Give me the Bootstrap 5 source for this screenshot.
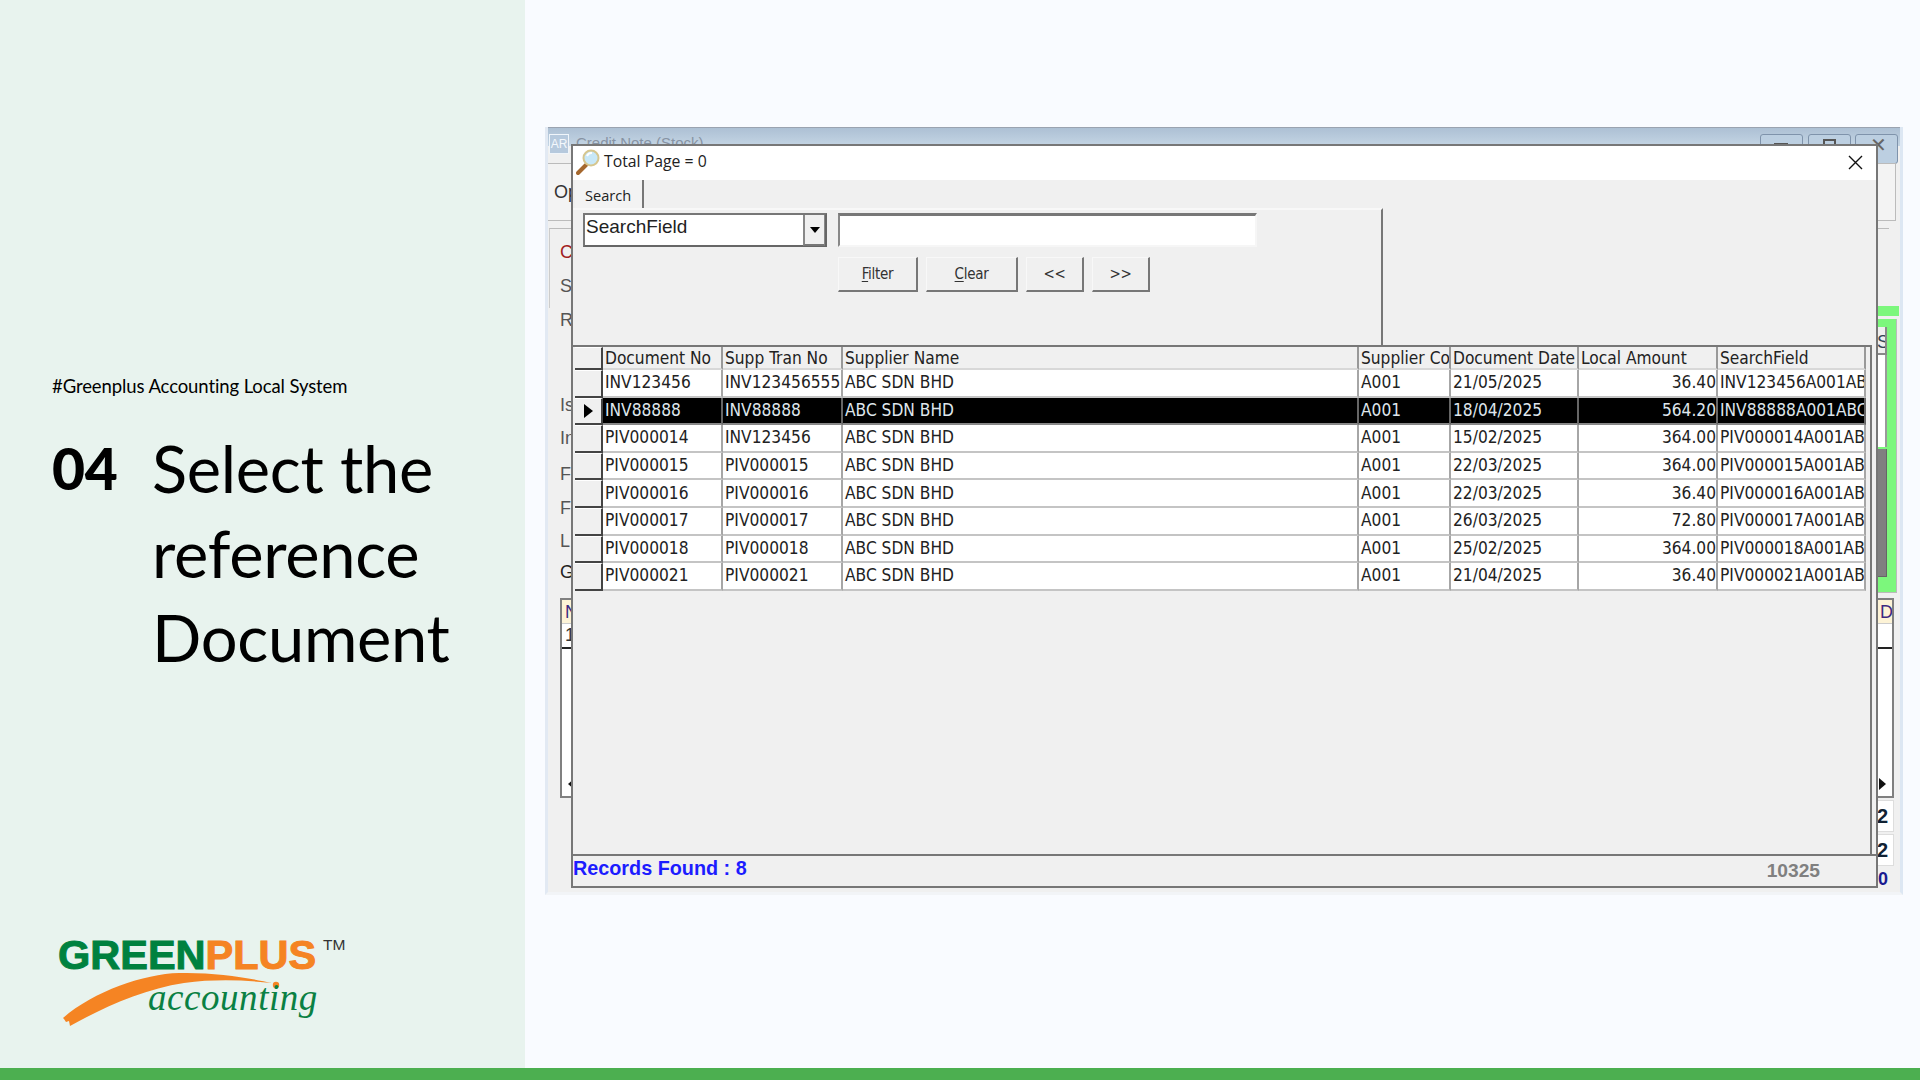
<!DOCTYPE html>
<html lang="en">
<head>
<meta charset="utf-8">
<title>Select the reference Document</title>
<link rel="stylesheet" href="https://cdn.jsdelivr.net/npm/bootstrap@5.3.0/dist/css/bootstrap.min.css">
<style>
html,body{height:1080px;overflow:hidden}
body{background:#f9fbff;font-family:"Liberation Sans",sans-serif;color:#000}
.slide{height:1068px;position:relative}
.footbar{height:12px;background:#4caf50}
.sidepanel{width:525px;height:1068px;background:#e8f3ee;padding:374px 0 0 52px;font-family:Lato,sans-serif;flex:none}
.tagline{font-size:18.5px;line-height:24px;letter-spacing:-.1px;margin-bottom:28px}
.stepwrap{font-size:65px;line-height:84.5px;letter-spacing:-.3px}
.stepno{width:100px;font-weight:900;font-size:57px;flex:none}
.logoart{display:block;margin-top:auto;margin-left:2px;margin-bottom:27px}
.lg-word{font-family:"Liberation Sans",sans-serif;font-weight:700;font-size:41.5px;stroke-width:1px}
.lg-green{fill:#00813f;stroke:#00813f}
.lg-orange{fill:#f58423;stroke:#f58423}
.lg-acc{font-family:"Liberation Serif",serif;font-style:italic;font-size:37px;fill:#0a8043;letter-spacing:.55px}
.lg-tm{font-family:"Liberation Sans",sans-serif;font-size:15.5px;fill:#333}

/* back window */
.backwin{position:absolute;left:545px;top:127px;width:1358px;height:768px;background:#f0f0f0;border-left:3px solid #e2e9f3;border-right:3px solid #dde7f3;border-bottom:3px solid #f2f4f7;overflow:hidden;font-size:18px;color:#555}
.backwin>*{position:absolute}
.bw-title{left:0;top:0;right:0;height:19px;background:linear-gradient(#adc0d4,#c4d5e4);border-top:1px solid #9aa3b0}
.bw-app{left:1px;top:7px;width:20px;height:20px;border:1px solid #f0f5fa;background:#b6c9dd;color:#f4f8fc;font-size:12px;line-height:18px;text-align:center}
.bw-cap{left:28px;top:5px;font-size:15px;color:#8793a3}
.bw-ctl{top:7px;width:43px;height:30px;border:1px solid #7f93ab;border-radius:3px;background:#bccfe1}
.bw-c1{left:1212px}.bw-c2{left:1260px}.bw-c3{left:1307px}
.bw-min{left:1226px;top:16px;width:14px;height:2px;background:#555}
.bw-max{left:1275px;top:12px;width:13px;height:10px;border:2px solid #555}
.bw-x{left:1322px;top:9px;color:#666;font-size:20px;line-height:18px}
.bw-toolbox{left:-1px;top:36px;width:1349px;height:58px;border:1px solid #bbb;background:#f3f3f3}
.bw-group{left:1px;top:101px;width:1340px;height:80px;border-top:1px solid #bbb;border-left:1px solid #ccc}
.bw-innerbtn{left:1305px;top:43px;width:20px;height:39px;border-right:2px solid #777;border-bottom:2px solid #777;background:#f3f3f3}
.bw-op{left:6px;top:52px;color:#333}
.bw-red{color:#a12020}
.bw-dark{color:#222}
.bl{left:12px}
.y1{top:112px}.y2{top:146px}.y3{top:180px}.y4{top:265px}.y5{top:298px}.y6{top:334px}.y7{top:368px}.y8{top:401px}.y9{top:432px}
.bw-greentop{left:1329px;top:179px;width:22px;height:10px;background:#7cf77c}
.bw-greenbox{left:1329px;top:192px;width:20px;height:274px;background:#7cf77c;border-right:1px solid #bbb;border-bottom:1px solid #bbb}
.bw-gs{left:1329px;top:200px;width:10px;height:28px;background:#efefef;border-right:2px solid #888;border-bottom:2px solid #888;font-size:18px;line-height:30px;color:#345;overflow:hidden}
.bw-white{left:1329px;top:228px;width:10px;height:92px;background:#fff;border-right:2px solid #999}
.bw-scroll{left:1329px;top:322px;width:10px;height:128px;background:#808080;border-right:1px solid #666;border-bottom:1px solid #666}
.subgrid{top:471px;height:200px;background:#fff;border:2px solid #808080;overflow:hidden}
.sg-left{left:12px;width:24px}
.sg-right{left:1329px;width:17px;border-left:0}
.sg-head{height:24px;background:#fdf3d6;font-size:18px;line-height:24px;color:#3d2a80;padding-left:3px;border-bottom:1px solid #ccc}
.sg-row{height:25px;border-bottom:2px solid #222;line-height:22px;color:#333;padding-left:3px;font-size:18px}
.sg-arrow{position:absolute;bottom:6px;width:0;height:0;border-top:6px solid transparent;border-bottom:6px solid transparent}
.sg-left .sg-arrow{left:6px;border-right:7px solid #111}
.sg-right .sg-arrow{left:2px;border-left:7px solid #111}
.bw-val{left:1329px;width:17px;height:32px;background:#fff;border:1px solid #ddd;border-left:0;font-weight:700;color:#123;line-height:30px;font-size:20px}
.v1{top:673px}.v2{top:707px}
.bw-zero{left:1330px;top:741px;color:#1a1a90;font-weight:700;font-size:18px;line-height:22px}

/* dialog */
.dialog{position:absolute;left:571px;top:144px;width:1307px;height:744px;background:#f0f0f0;border:2px solid #777;border-radius:0;font-family:"DejaVu Sans",sans-serif;font-stretch:condensed;color:#222}
.dlg-title{height:34px;background:#fff;font-family:"Open Sans",sans-serif;font-stretch:normal;font-size:15.8px;color:#222;padding:0 0 2px 3px}
.dlg-close{margin-left:auto;margin-right:13px}
.tabstrip{height:28px;padding-left:2px}
.tabhead{width:69px;height:28px;border-right:2px solid #777;background:#f3f3f3;font-family:"Open Sans",sans-serif;font-stretch:normal;font-size:14.6px;line-height:31px;padding-left:10px}
.filterpane{width:810px;height:137px;background:#f0f0f0;border-top:2px solid #f8f8f8;border-right:2px solid #777;padding:3px 0 0 10px;flex:none}
.combo{width:244px;height:34px;background:#fff;border:2px solid #777;border-right-color:#666;border-bottom-color:#666;font-family:"Liberation Sans",sans-serif;font-stretch:normal;font-size:19px;line-height:24px;padding-left:1px;color:#222}
.combobtn{width:22px;height:31px;margin-left:auto;background:#f0f0f0;border-left:2px solid #888;border-bottom:2px solid #777;border-right:1px solid #888}
.findinput.form-control{width:419px;height:34px;margin-left:11px;border:0;border-top:3px solid #777;border-left:2px solid #888;border-radius:0;border-right:2px solid #f6f6f6;border-bottom:2px solid #f6f6f6;background:#fff;padding:0}
.btnrow{margin:10px 0 0 255px;gap:8px}
.winbtn.btn{height:35px;padding:0;border:0;border-radius:0;background:#f0f0f0;border-top:1px solid #f8f8f8;border-left:1px solid #f8f8f8;border-right:2px solid #777;border-bottom:2px solid #777;box-shadow:none;font-size:15px;color:#333;letter-spacing:-.3px;font-family:"DejaVu Sans",sans-serif;font-stretch:condensed}
.w1{width:80px}.w2{width:92px}.w3{width:58px}
.winbtn u{text-underline-offset:2px}
.gridzone{flex:1 1 auto;margin-right:4px;border-top:2px solid #777;padding-left:2px;border-right:2px solid #777;min-height:0;overflow:hidden}
.table.dataset{table-layout:fixed;width:1291px;border-collapse:separate;border-spacing:0;margin:0;--bs-table-bg:#fff;--bs-table-color:#222;font-size:17.2px;line-height:22px}
.dataset th,.dataset td{padding:0 0 0 2px;white-space:nowrap;overflow:hidden;border:0;border-right:2px solid #a6a6a6;border-bottom:2px solid #c4c4c4;font-weight:400;vertical-align:middle}
.dataset th{height:23px;line-height:19px;background:#f0f0f0;border-bottom-color:#d8d8d8;border-right-color:#999;--bs-table-bg:#f0f0f0;padding-top:2px}
.dataset td{height:27.6px;box-sizing:border-box;padding-bottom:1px}
.dataset th.indcell,.dataset td.indcell{background:#f0f0f0;--bs-table-bg:#f0f0f0;border-right:2px solid #444;border-bottom:2px solid #444;border-top:1px solid #fff;padding:0}
.dataset td.amt{text-align:right;padding:0 0 1px 0}
.dataset tr.picked td{background:#000;--bs-table-bg:#000;color:#dfe6ec;border-bottom-color:#888;border-right-color:#666}
.dataset tr.picked td.indcell{background:#f0f0f0;--bs-table-bg:#f0f0f0;color:#000;border-right:2px solid #444;border-bottom:2px solid #444}
.rowmark{display:block;width:0;height:0;margin-left:9px;border-top:7px solid transparent;border-bottom:7px solid transparent;border-left:9px solid #000}
.statusline{height:32px;flex:none;border-top:2px solid #777;font-family:"Liberation Sans",sans-serif;font-stretch:normal;font-weight:700;font-size:19.8px;padding-bottom:4px}
.recfound{color:#1c1cff}
.opcode{color:#808080;margin-left:auto;margin-right:56px;font-size:19.2px;padding-top:4px}
</style>
</head>
<body>
<div class="slide d-flex">
  <aside class="sidepanel d-flex flex-column">
    <div class="tagline">#Greenplus Accounting Local System</div>
    <div class="stepwrap d-flex">
      <div class="stepno">04</div>
      <div>Select the<br>reference<br>Document</div>
    </div>
    <svg class="logoart" width="300" height="110" viewBox="0 0 300 110" xmlns="http://www.w3.org/2000/svg">
      <text x="4" y="38" class="lg-word"><tspan class="lg-green">GREEN</tspan><tspan class="lg-orange">PLUS</tspan></text>
      <text x="269" y="19" class="lg-tm">TM</text>
      <path d="M9 87 C40 60 90 43 125 42 C160 41 195 47 218 52 C190 49 160 48 130 52 C90 58 50 76 16 95 L15 90 L12 91 L10 88 Z" fill="#f58423"/>
      <circle cx="222" cy="54" r="3.2" fill="#f58423"/>
      <text x="94" y="79" class="lg-acc">accounting</text>
    </svg>
  </aside>

  <section class="backwin" aria-hidden="true">
    <div class="bw-title"></div>
    <div class="bw-app">AR</div>
    <div class="bw-cap">Credit Note (Stock)</div>
    <div class="bw-ctl bw-c1"></div><div class="bw-ctl bw-c2"></div><div class="bw-ctl bw-c3"></div>
    <div class="bw-min"></div><div class="bw-max"></div>
    <div class="bw-x">✕</div>
    <div class="bw-toolbox"></div>
    <div class="bw-innerbtn"></div>
    <div class="bw-op">Op</div>
    <div class="bw-group"></div>
    <div class="bl y1 bw-red">C</div><div class="bl y2">S</div><div class="bl y3">R</div>
    <div class="bl y4">Is</div><div class="bl y5">In</div><div class="bl y6">F</div><div class="bl y7">F</div><div class="bl y8">L</div><div class="bl y9 bw-dark">G</div>
    <div class="bw-greentop"></div>
    <div class="bw-greenbox"></div>
    <div class="bw-white"></div>
    <div class="bw-gs">S</div>
    <div class="bw-scroll"></div>
    <div class="subgrid sg-left"><div class="sg-head">N</div><div class="sg-row">1</div><span class="sg-arrow"></span></div>
    <div class="subgrid sg-right"><div class="sg-head">D</div><div class="sg-row"></div><span class="sg-arrow"></span></div>
    <div class="bw-val v1">2</div><div class="bw-val v2">2</div><div class="bw-zero">0</div>
  </section>

  <section class="dialog d-flex flex-column">
    <div class="dlg-title d-flex align-items-center">
      <svg width="24" height="28" viewBox="0 0 24 28" class="me-1" xmlns="http://www.w3.org/2000/svg">
        <path d="M10 17 L2 25" stroke="#a5682e" stroke-width="4" stroke-linecap="round"/>
        <circle cx="15" cy="10" r="7.5" fill="#c8e8f8" stroke="#d6c68f" stroke-width="2"/>
        <path d="M11 8 A5 5 0 0 1 16 5" stroke="#fff" stroke-width="2" fill="none"/>
      </svg>
      <span>Total Page = 0</span>
      <svg class="dlg-close" width="15" height="15" viewBox="0 0 15 15" xmlns="http://www.w3.org/2000/svg"><path d="M1 1 L14 14 M14 1 L1 14" stroke="#111" stroke-width="1.4"/></svg>
    </div>
    <div class="tabstrip"><div class="tabhead">Search</div></div>
    <div class="filterpane">
      <div class="d-flex">
        <div class="combo d-flex">
          <span>SearchField</span>
          <span class="combobtn d-flex align-items-center justify-content-center">
            <svg width="10" height="6" viewBox="0 0 10 6" xmlns="http://www.w3.org/2000/svg"><path d="M0 0 H10 L5 6 Z" fill="#000"/></svg>
          </span>
        </div>
        <input class="form-control findinput" type="text" aria-label="Search">
      </div>
      <div class="d-flex btnrow">
        <button class="btn winbtn w1" type="button"><u>F</u>ilter</button>
        <button class="btn winbtn w2" type="button"><u>C</u>lear</button>
        <button class="btn winbtn w3" type="button">&lt;&lt;</button>
        <button class="btn winbtn w3" type="button">&gt;&gt;</button>
      </div>
    </div>
    <div class="gridzone">
      <table class="table dataset">
        <colgroup><col style="width:28px"><col style="width:120px"><col style="width:120px"><col style="width:516px"><col style="width:92px"><col style="width:128px"><col style="width:139px"><col style="width:148px"></colgroup>
        <thead><tr><th class="indcell"></th><th>Document No</th><th>Supp Tran No</th><th>Supplier Name</th><th>Supplier Code</th><th>Document Date</th><th>Local Amount</th><th>SearchField</th></tr></thead>
        <tbody>
          <tr><td class="indcell"></td><td>INV123456</td><td>INV123456555</td><td>ABC SDN BHD</td><td>A001</td><td>21/05/2025</td><td class="amt">36.40</td><td>INV123456A001ABC</td></tr>
          <tr class="picked"><td class="indcell"><span class="rowmark"></span></td><td>INV88888</td><td>INV88888</td><td>ABC SDN BHD</td><td>A001</td><td>18/04/2025</td><td class="amt">564.20</td><td>INV88888A001ABC</td></tr>
          <tr><td class="indcell"></td><td>PIV000014</td><td>INV123456</td><td>ABC SDN BHD</td><td>A001</td><td>15/02/2025</td><td class="amt">364.00</td><td>PIV000014A001ABC</td></tr>
          <tr><td class="indcell"></td><td>PIV000015</td><td>PIV000015</td><td>ABC SDN BHD</td><td>A001</td><td>22/03/2025</td><td class="amt">364.00</td><td>PIV000015A001ABC</td></tr>
          <tr><td class="indcell"></td><td>PIV000016</td><td>PIV000016</td><td>ABC SDN BHD</td><td>A001</td><td>22/03/2025</td><td class="amt">36.40</td><td>PIV000016A001ABC</td></tr>
          <tr><td class="indcell"></td><td>PIV000017</td><td>PIV000017</td><td>ABC SDN BHD</td><td>A001</td><td>26/03/2025</td><td class="amt">72.80</td><td>PIV000017A001ABC</td></tr>
          <tr><td class="indcell"></td><td>PIV000018</td><td>PIV000018</td><td>ABC SDN BHD</td><td>A001</td><td>25/02/2025</td><td class="amt">364.00</td><td>PIV000018A001ABC</td></tr>
          <tr><td class="indcell"></td><td>PIV000021</td><td>PIV000021</td><td>ABC SDN BHD</td><td>A001</td><td>21/04/2025</td><td class="amt">36.40</td><td>PIV000021A001ABC</td></tr>
        </tbody>
      </table>
    </div>
    <div class="statusline d-flex align-items-center">
      <span class="recfound">Records Found : 8</span>
      <span class="opcode">10325</span>
    </div>
  </section>
</div>
<div class="footbar"></div>
<script src="https://cdn.jsdelivr.net/npm/bootstrap@5.3.0/dist/js/bootstrap.bundle.min.js"></script>
</body>
</html>
